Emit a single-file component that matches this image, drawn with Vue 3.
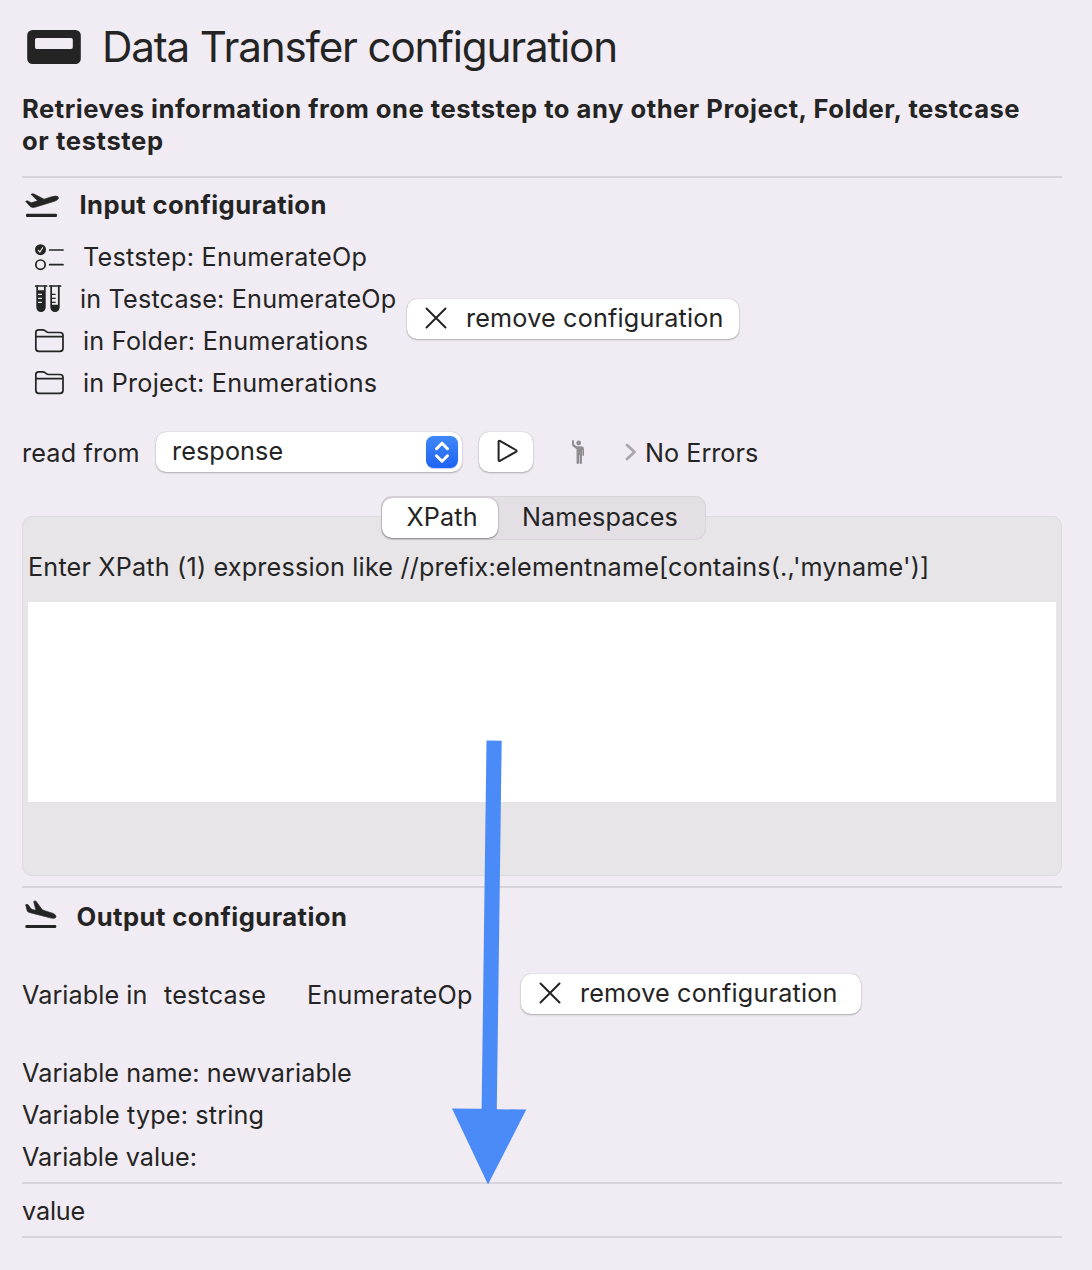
<script setup>
import { ref } from 'vue'

const tab = ref('XPath')
const tabs = ['XPath', 'Namespaces']
</script>

<template>
  <main class="window">
    <header class="title-row">
      <svg class="title-icon" viewBox="0 0 54 34">
        <path fill-rule="evenodd" d="M5.500 0h43a5.300 5.300 0 0 1 5.300 5.300v23.400a5.300 5.300 0 0 1-5.300 5.300h-43A5.300 5.300 0 0 1 .2 28.700V5.300A5.300 5.300 0 0 1 5.500 0zM9.700 8a1.700 1.700 0 0 0-1.700 1.700v7.600A1.700 1.700 0 0 0 9.700 19h34.400a1.700 1.700 0 0 0 1.700-1.700V9.700A1.700 1.700 0 0 0 44.100 8z" />
      </svg>
      <h1>Data Transfer configuration</h1>
    </header>

    <p class="intro">
      <span>Retrieves information from one teststep to any other Project, Folder, testcase</span><br />
      <span class="intro-end">or teststep</span>
    </p>

    <hr />

    <section class="input">
      <div class="heading">
        <svg class="heading-icon" viewBox="36 12 126 126">
          <path class="plane" d="M47 64q4-2.500 8-.5l9 5 19-6-20-19.500q4-3 9-1l30 15.500 21-6.500q16-5 21-1 4 4-3 10-4 3-15 6L75 81.500q-10 2.500-15-2.500z" />
          <rect x="48" y="101.500" width="93" height="9.500" rx="3.500" />
        </svg>
        <h2 class="h-input">Input configuration</h2>
      </div>

      <div class="source">
        <ul class="path">
          <li>
            <svg viewBox="66 168 108 126">
              <circle cx="91.500" cy="209" r="16.500" />
              <path class="check" d="M84 210l5.500 6 9-14" />
              <circle class="line" cx="91.500" cy="254" r="14" />
              <path class="line" d="M119 210h40M119 254h40" />
            </svg>
            <span class="t-step">Teststep: EnumerateOp</span>
          </li>
          <li class="case">
            <svg viewBox="66 294 108 126">
              <path class="line" d="M77 318h33M119 318h33" />
              <path class="line" d="M81.500 318v64a11.500 11.500 0 0 0 23 0v-64M123.500 318v64a11.500 11.500 0 0 0 23 0v-64" />
              <path d="M81 331h24v51a12 12 0 0 1-24 0zM123 374h24v8a11.500 11.500 0 0 1-24 0z" />
              <path class="tick-light" d="M84 343h12M84 355h12M84 367h12" />
              <path class="tick" d="M124 343h13M124 355h13M124 367h13" />
            </svg>
            <span class="t-case">in Testcase: EnumerateOp</span>
          </li>
          <li v-for="row in [['folder', 'in Folder: Enumerations'], ['project', 'in Project: Enumerations']]" :key="row[0]">
            <svg viewBox="66 420 108 126">
              <path class="line" d="M77.500 503v-45q0-8.500 8.500-8.500h12q4 0 7 2.500l4 3q3 2.500 7 2.500h34q9 0 9 8.500v39q0 9-9 9H86.500q-9 0-9-9zM77.500 470h81.500" />
            </svg>
            <span :class="'t-' + row[0]">{{ row[1] }}</span>
          </li>
        </ul>
        <button class="btn remove">
          <svg class="cross" viewBox="0 0 22 22"><path d="M1.500 1.500l19 19M20.500 1.500l-19 19" /></svg>
          <span>remove configuration</span>
        </button>
      </div>

      <div class="read">
        <span class="t-read">read from</span>
        <button class="btn select">
          <span class="t-response">response</span>
          <i class="stepper">
            <svg viewBox="0 0 32 32"><path d="M10.500 12.700L16 7.200l5.500 5.500M10.500 19.800l5.500 5.500 5.500-5.500" /></svg>
          </i>
        </button>
        <button class="btn play">
          <svg viewBox="0 0 22 24"><path d="M1.600 2.700q0-1.500 1.300-.8l16 9.100q1.500.9 0 1.800l-16 9q-1.300.7-1.300-.8z" /></svg>
        </button>
        <svg class="person" viewBox="510 57 48 80">
          <circle cx="536" cy="69" r="7.200" />
          <path d="M516 63q0-3 3-3t3 3v10l7 5q2 1 5 1h9q9 0 9 9v17q0 3-2.500 3t-2.500-3V90h-1v38q0 4-3.700 4t-3.700-4v-22h-1.600v22q0 4-3.700 4t-3.700-4V87l-10-7q-3.500-2-3.500-7z" />
        </svg>
        <svg class="chevron" viewBox="0 0 12 20"><path d="M2 3l7.500 7L2 17" /></svg>
        <span class="t-errors">No Errors</span>
      </div>
    </section>

    <section class="editor">
      <nav class="tabs">
        <button v-for="name in tabs" :key="name" :class="['tab', 'tab-' + name, { on: tab === name }]" @click="tab = name">{{ name }}</button>
      </nav>
      <div class="panel">
        <p>Enter XPath (1) expression like //prefix:elementname[contains(.,'myname')]</p>
        <div class="area"></div>
      </div>
    </section>

    <hr class="second" />

    <section class="output">
      <div class="heading">
        <svg class="heading-icon" viewBox="36 108 126 126">
          <path class="plane" d="M47 134q4-2.500 8 1l7 10q2 2.500 6 3.500l10 3-7-27q4-3 7-1l16 22q3 4 8 6l28 9q8 4 8 9 0 6-9 5.500-4 0-12-2.500L58 157.500q-6-2-7-7z" />
          <rect x="46" y="195" width="93" height="9" rx="3.500" />
        </svg>
        <h2 class="h-output">Output configuration</h2>
      </div>

      <div class="target">
        <span class="t-in">Variable in</span>
        <span class="t-testcase">testcase</span>
        <span class="t-op">EnumerateOp</span>
        <button class="btn remove wide">
          <svg class="cross" viewBox="0 0 22 22"><path d="M1.500 1.500l19 19M20.500 1.500l-19 19" /></svg>
          <span>remove configuration</span>
        </button>
      </div>

      <div class="vars">
        <div class="v-name">Variable name: newvariable</div>
        <div class="v-type">Variable type: string</div>
        <div>Variable value:</div>
      </div>
      <hr />
      <div class="value">value</div>
      <hr />
    </section>

    <svg class="arrow" viewBox="0 0 76 446">
      <path d="M34.500.5L49.700.8 44.800 369.200l29.500.4L36 444.500 0 368.500l29.600.3z" />
    </svg>
  </main>
</template>

<style>
body {
  background: #f1ecf3;
}
</style>

<style scoped>
.window {
  position: relative;
  box-sizing: border-box;
  width: 1092px;
  height: 1270px;
  padding: 0 30px 0 22px;
  overflow: hidden;
  background: #f1ecf3;
  color: #242424;
  font: 400 25.2px/42px Inter, "Liberation Sans", sans-serif;
  letter-spacing: 0.18px;
  white-space: nowrap;
}
svg {
  display: block;
  flex: none;
  fill: #242424;
}
h1, h2, p, ul {
  margin: 0;
  padding: 0;
  list-style: none;
}
hr {
  height: 2px;
  margin: 0;
  border: 0;
  background: #d8d4da;
}

.title-row {
  display: flex;
  align-items: center;
  height: 93px;
  padding-left: 5px;
}
.title-icon {
  width: 54px;
  height: 34px;
  margin: 1px 21px 0 0;
}
h1 {
  font-size: 42.200px;
  font-weight: 400;
  line-height: 50px;
  letter-spacing: -1.180px;
}
.intro {
  height: 83px;
  font-size: 25.600px;
  font-weight: 700;
  line-height: 32px;
  letter-spacing: 0.510px;
}
.intro-end {
  letter-spacing: 0.620px;
}

.heading {
  display: flex;
  align-items: center;
  height: 42px;
}
.heading-icon {
  width: 42px;
  height: 42px;
}
.plane {
  stroke: #242424;
  stroke-width: 2;
  stroke-linejoin: round;
}
h2 {
  font-size: 25.600px;
  font-weight: 700;
  line-height: 42px;
}
.h-input {
  margin-left: 15.500px;
  letter-spacing: 0.405px;
}
.h-output {
  margin-left: 12.500px;
  letter-spacing: 0.470px;
}
.input .heading {
  margin-top: 6px;
}

.source {
  display: flex;
  align-items: center;
  margin-top: 10px;
}
.path {
  width: 385px;
}
.path li {
  display: flex;
  height: 42px;
  padding-left: 10px;
}
.path svg {
  width: 36px;
  height: 42px;
  margin-right: 15px;
}
.path .case svg {
  margin-right: 12px;
}
.t-step { letter-spacing: 0.260px; }
.t-case { letter-spacing: 0.180px; }
.t-folder { letter-spacing: 0.235px; }
.t-project { letter-spacing: 0.225px; }
.line {
  fill: none;
  stroke: #242424;
  stroke-width: 5.200;
  stroke-linecap: round;
}
.check, .tick-light {
  fill: none;
  stroke: #f1ecf3;
  stroke-width: 3.500;
}
.tick {
  fill: none;
  stroke: #242424;
  stroke-width: 3.500;
}

.btn {
  display: flex;
  align-items: center;
  box-sizing: border-box;
  height: 40px;
  padding: 0;
  border: 0;
  border-radius: 10px;
  background: #fff;
  box-shadow: 0 0 1px rgba(0, 0, 0, 0.3), 0 1px 2px rgba(0, 0, 0, 0.26);
  color: inherit;
  font: inherit;
  line-height: 38px;
  letter-spacing: 0.18px;
}
.btn > span {
  height: 40px;
}
.remove {
  width: 332px;
  margin-top: -2px;
  padding-left: 18px;
}
.wide {
  width: 340px;
}
.cross {
  width: 22px;
  height: 22px;
  margin: -2px 19px 0 0;
}
.cross path {
  fill: none;
  stroke: #242424;
  stroke-width: 2;
  stroke-linecap: round;
}

.read {
  display: flex;
  align-items: center;
  height: 42px;
  margin-top: 27px;
}
.t-read {
  width: 134px;
  padding-top: 2px;
  line-height: 44px;
  letter-spacing: 0.17px;
}
.select {
  justify-content: space-between;
  width: 306px;
  padding: 0 4px 0 16px;
}
.t-response {
  letter-spacing: 0.107px;
}
.stepper {
  width: 32px;
  height: 32px;
  border-radius: 7.500px;
  background: linear-gradient(#4088f8, #1d63f3);
  box-shadow: 0 1px 1px rgba(29, 99, 243, 0.3);
}
.stepper path {
  fill: none;
  stroke: #fff;
  stroke-width: 3;
  stroke-linecap: round;
  stroke-linejoin: round;
}
.play {
  width: 54px;
  margin-left: 17px;
  padding-left: 18px;
}
.play svg {
  width: 22px;
  height: 24px;
  margin-top: -2px;
}
.play path {
  fill: none;
  stroke: #242424;
  stroke-width: 2;
}
.person {
  width: 16px;
  height: 26.700px;
  margin: 0 0 0 37px;
  fill: #918e93;
}
.chevron {
  width: 12px;
  height: 20px;
  margin: -1px 0 0 38.500px;
}
.chevron path {
  fill: none;
  stroke: #aaa6ac;
  stroke-width: 2.800;
  stroke-linecap: round;
  stroke-linejoin: round;
}
.t-errors {
  margin-left: 8.500px;
  padding-top: 2px;
  line-height: 44px;
  letter-spacing: 0.021px;
}

.editor {
  margin-top: 23px;
}
.tabs {
  position: relative;
  z-index: 1;
  display: flex;
  box-sizing: border-box;
  width: 325px;
  height: 44px;
  margin: 0 0 -24px 359px;
  padding: 2px 1px;
  border-radius: 11px;
  background: #e4dfe5;
  box-shadow: inset 0 0 0 1px #dad5db;
}
.tab {
  height: 40px;
  padding: 0 0 2px;
  border: 0;
  border-radius: 10px;
  background: none;
  color: inherit;
  font: inherit;
  line-height: 38px;
  text-align: left;
}
.tab.on {
  background: #fff;
  box-shadow: 0 0 1.500px rgba(0, 0, 0, 0.4), 0 1px 1.500px rgba(0, 0, 0, 0.35);
}
.tab-XPath {
  width: 116px;
  padding-left: 24.500px;
  letter-spacing: 0.150px;
}
.tab-Namespaces {
  padding-left: 24px;
  letter-spacing: 0.050px;
}
.panel {
  box-sizing: border-box;
  height: 360px;
  padding: 29px 5px 0;
  border: 1px solid #dedadf;
  border-radius: 10px;
  background: #e7e5e8;
}
.panel p {
  height: 56px;
  line-height: 42px;
  letter-spacing: 0.183px;
}
.area {
  height: 200px;
  background: #fff;
}

.second {
  margin-top: 10px;
}
.output .heading {
  margin-top: 8px;
}
.target {
  display: flex;
  align-items: center;
  height: 42px;
  margin-top: 36px;
}
.t-in {
  width: 142px;
  letter-spacing: 0.074px;
}
.t-testcase {
  width: 143px;
  letter-spacing: 0.170px;
}
.t-op {
  width: 214px;
  letter-spacing: 0.276px;
}
.vars {
  margin-top: 36px;
  letter-spacing: 0.010px;
}
.v-name { letter-spacing: 0.070px; }
.v-type { letter-spacing: 0.155px; }
.output hr {
  margin-top: 4px;
}
.value {
  height: 48px;
  line-height: 54px;
  letter-spacing: -0.150px;
}

.arrow {
  position: absolute;
  left: 452px;
  top: 740px;
  width: 76px;
  height: 446px;
  fill: #4b8bf8;
}
</style>
